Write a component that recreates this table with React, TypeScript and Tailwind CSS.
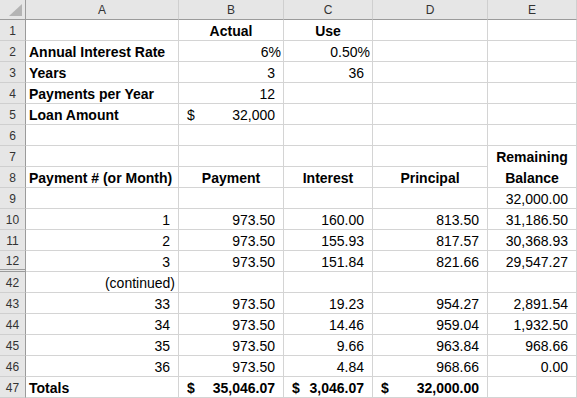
import React from "react";

type Cell = {
  v?: string;
  a?: "l" | "r" | "c" | "pct" | "acct" | "cont";
  b?: boolean;
  nb?: boolean;
};

const R = (v: string): Cell => ({ v, a: "r" });

const ROWS: { n: string; dbl?: boolean; cells: Cell[] }[] = [
  { n: "1", cells: [{}, { v: "Actual", a: "c", b: true }, { v: "Use", a: "c", b: true }, {}, {}] },
  { n: "2", cells: [{ v: "Annual Interest Rate", a: "l", b: true }, { v: "6%", a: "pct" }, { v: "0.50%", a: "pct" }, {}, {}] },
  { n: "3", cells: [{ v: "Years", a: "l", b: true }, R("3"), R("36"), {}, {}] },
  { n: "4", cells: [{ v: "Payments per Year", a: "l", b: true }, R("12"), {}, {}, {}] },
  { n: "5", cells: [{ v: "Loan Amount", a: "l", b: true }, { v: "32,000", a: "acct" }, {}, {}, {}] },
  { n: "6", cells: [{}, {}, {}, {}, {}] },
  { n: "7", cells: [{}, {}, {}, {}, { v: "Remaining", a: "c", b: true, nb: true }] },
  {
    n: "8",
    cells: [
      { v: "Payment # (or Month)", a: "l", b: true },
      { v: "Payment", a: "c", b: true },
      { v: "Interest", a: "c", b: true },
      { v: "Principal", a: "c", b: true },
      { v: "Balance", a: "c", b: true },
    ],
  },
  { n: "9", cells: [{}, {}, {}, {}, R("32,000.00")] },
  { n: "10", cells: [R("1"), R("973.50"), R("160.00"), R("813.50"), R("31,186.50")] },
  { n: "11", cells: [R("2"), R("973.50"), R("155.93"), R("817.57"), R("30,368.93")] },
  { n: "12", dbl: true, cells: [R("3"), R("973.50"), R("151.84"), R("821.66"), R("29,547.27")] },
  { n: "42", cells: [{ v: "(continued)", a: "cont" }, {}, {}, {}, {}] },
  { n: "43", cells: [R("33"), R("973.50"), R("19.23"), R("954.27"), R("2,891.54")] },
  { n: "44", cells: [R("34"), R("973.50"), R("14.46"), R("959.04"), R("1,932.50")] },
  { n: "45", cells: [R("35"), R("973.50"), R("9.66"), R("963.84"), R("968.66")] },
  { n: "46", cells: [R("36"), R("973.50"), R("4.84"), R("968.66"), R("0.00")] },
  {
    n: "47",
    cells: [
      { v: "Totals", a: "l", b: true },
      { v: "35,046.07", a: "acct", b: true },
      { v: "3,046.07", a: "acct", b: true },
      { v: "32,000.00", a: "acct", b: true },
      {},
    ],
  },
];

const COLS = ["A", "B", "C", "D", "E"];

function DataCell({ c }: { c: Cell }) {
  const border = c.nb
    ? "border-r border-[#d4d4d4]"
    : "border-r border-b border-[#d4d4d4]";
  const weight = c.b ? "font-bold" : "font-normal";
  const base = `h-[21px] ${border} ${weight} text-[14px] leading-[20px] pt-[1px] whitespace-nowrap text-black`;
  if (c.a === "acct") {
    return (
      <div className={`${base} flex justify-between pl-[8px] pr-[8px]`}>
        <span>$</span>
        <span>{c.v}</span>
      </div>
    );
  }
  let align = "";
  switch (c.a) {
    case "l":
      align = "text-left pl-[3px]";
      break;
    case "c":
      align = "text-center";
      break;
    case "r":
      align = "text-right pr-[8px]";
      break;
    case "pct":
      align = "text-right pr-[2px]";
      break;
    case "cont":
      align = "text-right pr-[3px]";
      break;
    default:
      align = "";
  }
  return <div className={`${base} ${align}`}>{c.v ?? ""}</div>;
}

export default function App() {
  return (
    <div
      className="w-[577px] h-[398px] overflow-hidden bg-white"
      style={{ fontFamily: '"Liberation Sans", Arial, sans-serif' }}
    >
      <div className="grid grid-cols-[26px_153px_105px_89px_115px_89px]">
        {/* corner */}
        <div className="h-[20px] bg-[#e6e6e6] border-r border-b border-[#9b9b9b] flex items-end justify-end pr-[3px] pb-[3px]">
          <svg width="13" height="12" viewBox="0 0 13 12">
            <polygon points="13,0 13,12 0,12" fill="#b4b4b4" />
          </svg>
        </div>
        {COLS.map((col) => (
          <div
            key={col}
            className="h-[20px] bg-[#e6e6e6] border-r border-r-[#cfcfcf] border-b border-b-[#9b9b9b] text-center text-[12px] leading-[20px] text-[#333]"
          >
            {col}
          </div>
        ))}
        {ROWS.map((row) => (
          <React.Fragment key={row.n}>
            <div
              className={
                row.dbl
                  ? "h-[21px] bg-[#e6e6e6] border-r border-r-[#9b9b9b] border-b-[3px] border-double border-b-[#9b9b9b] text-center text-[12px] leading-[18px] pt-[1px] text-[#333]"
                  : "h-[21px] bg-[#e6e6e6] border-r border-r-[#9b9b9b] border-b border-b-[#cfcfcf] text-center text-[12px] leading-[20px] pt-[1px] text-[#333]"
              }
            >
              {row.n}
            </div>
            {row.cells.map((c, i) => (
              <DataCell key={i} c={c} />
            ))}
          </React.Fragment>
        ))}
      </div>
    </div>
  );
}
